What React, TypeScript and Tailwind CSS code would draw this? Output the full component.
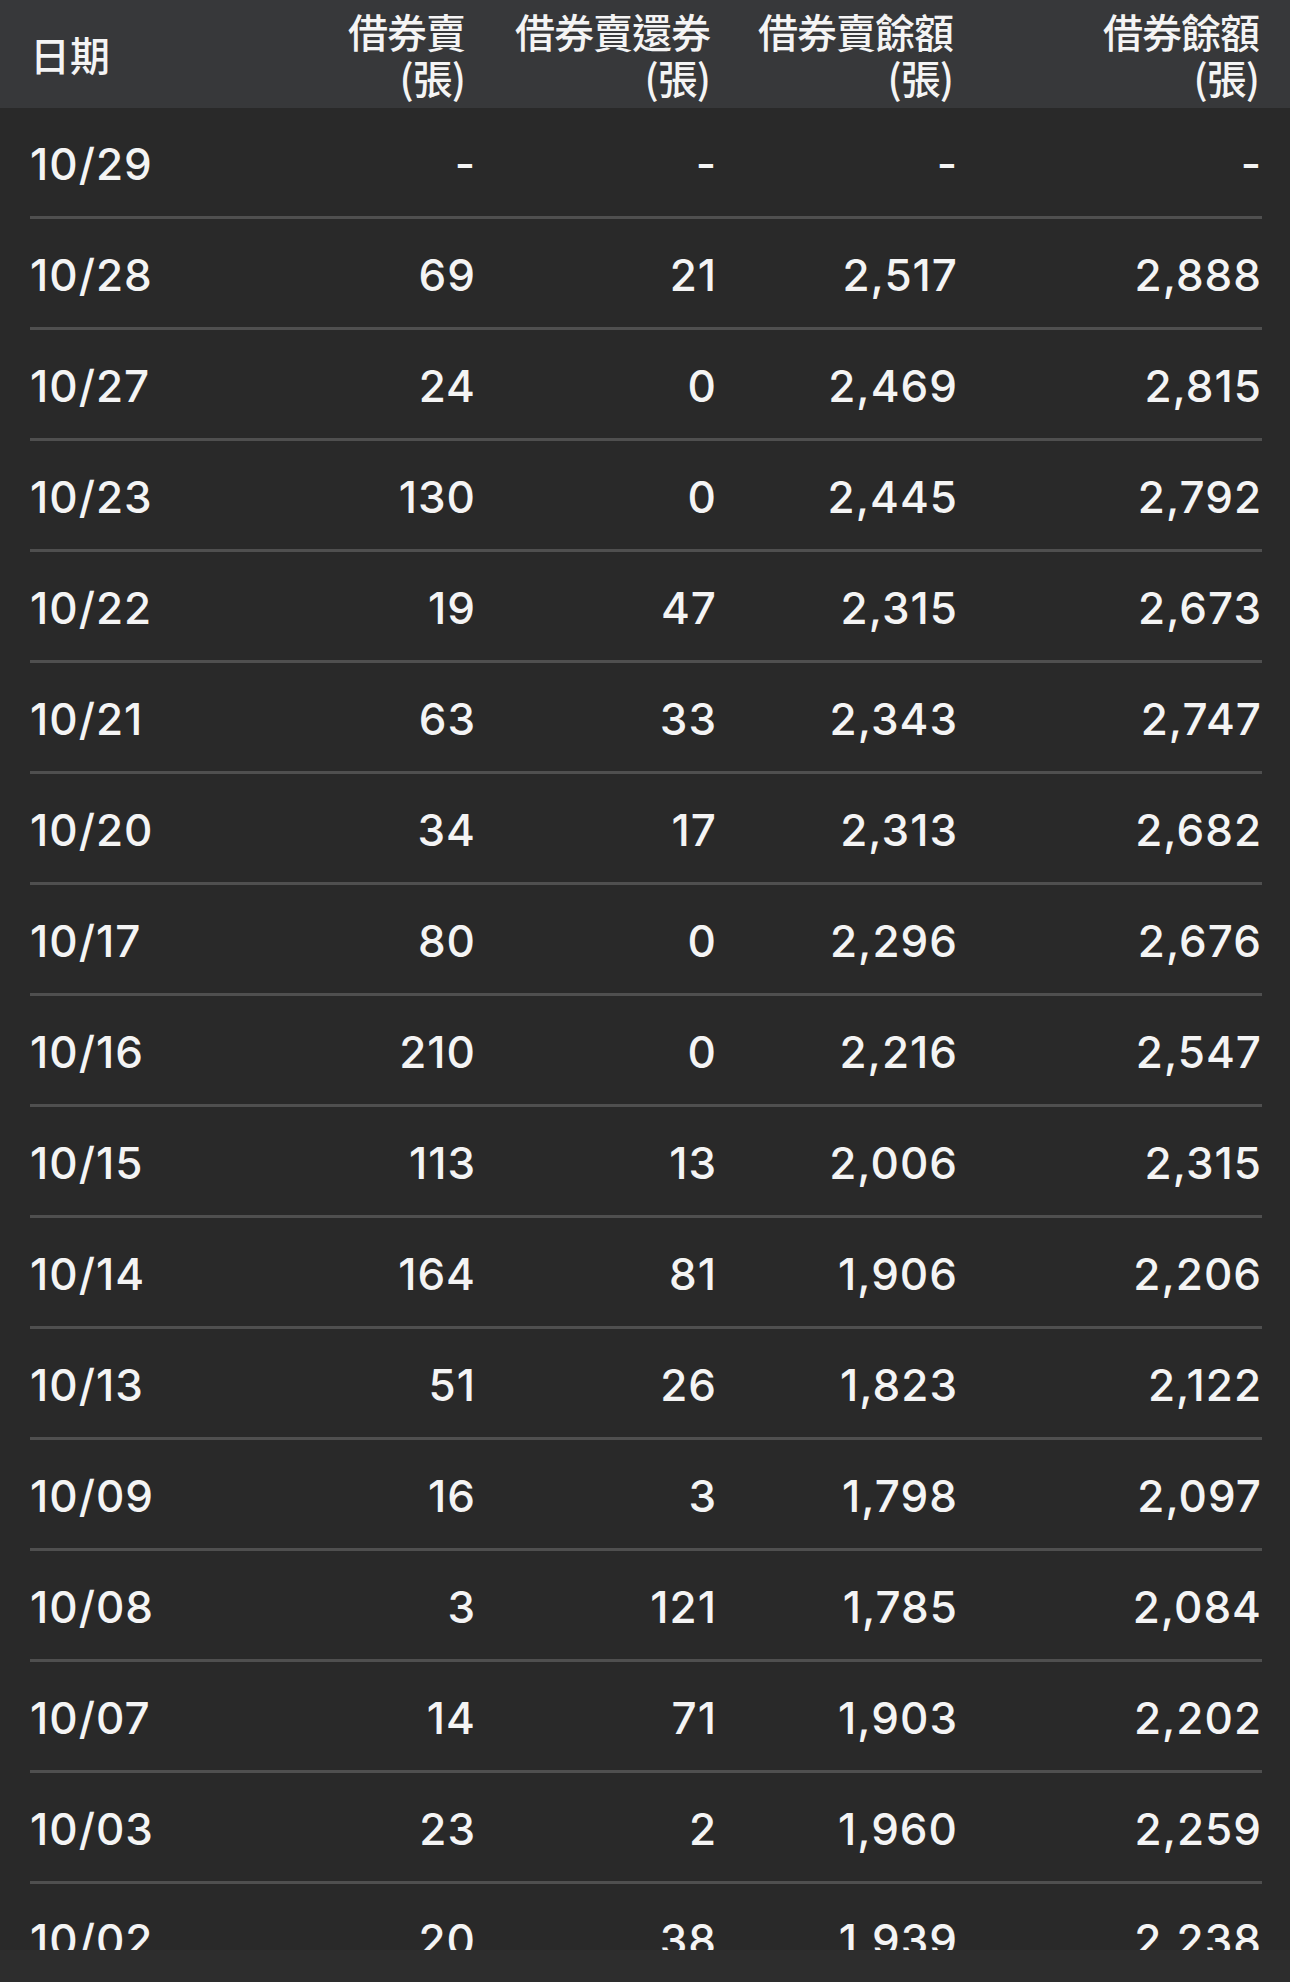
const rows: [string, string, string, string, string][] = [
  ['10/29', '-', '-', '-', '-'],
  ['10/28', '69', '21', '2,517', '2,888'],
  ['10/27', '24', '0', '2,469', '2,815'],
  ['10/23', '130', '0', '2,445', '2,792'],
  ['10/22', '19', '47', '2,315', '2,673'],
  ['10/21', '63', '33', '2,343', '2,747'],
  ['10/20', '34', '17', '2,313', '2,682'],
  ['10/17', '80', '0', '2,296', '2,676'],
  ['10/16', '210', '0', '2,216', '2,547'],
  ['10/15', '113', '13', '2,006', '2,315'],
  ['10/14', '164', '81', '1,906', '2,206'],
  ['10/13', '51', '26', '1,823', '2,122'],
  ['10/09', '16', '3', '1,798', '2,097'],
  ['10/08', '3', '121', '1,785', '2,084'],
  ['10/07', '14', '71', '1,903', '2,202'],
  ['10/03', '23', '2', '1,960', '2,259'],
  ['10/02', '20', '38', '1,939', '2,238'],
]

const cols = 'grid grid-cols-[205px_241px_241px_241px_1fr] items-center'

const HeadCell = ({ top, pad }: { top: string; pad: string }) => (
  <div className={`text-right leading-[46px] tracking-[-1px] ${pad}`}>
    <div>{top}</div>
    <div>(張)</div>
  </div>
)

export default function App() {
  return (
    <div className="w-[1290px] h-[1982px] flex flex-col overflow-hidden bg-[#292929] text-[#f4f4f4]">
      <div className={`${cols} h-[108px] shrink-0 px-[30px] bg-[#37383a] text-[40px] font-['Noto_Sans_CJK_TC',sans-serif] font-medium`}>
        <div>日期</div>
        <HeadCell top="借券賣" pad="pr-[11px]" />
        <HeadCell top="借券賣還券" pad="pr-[7px]" />
        <HeadCell top="借券賣餘額" pad="pr-[5px]" />
        <HeadCell top="借券餘額" pad="pr-[1px]" />
      </div>

      <div className="flex-1 overflow-hidden pl-[30px] pr-[28px] font-['Inter',sans-serif] font-medium text-[44px] tracking-[1px]">
        {rows.map(r => (
          <div key={r[0]} className={`${cols} h-[111px] pt-[4px] border-b-[3px] border-[#4f4f4f]`}>
            <div>{r[0]}</div>
            <div className="text-right">{r[1]}</div>
            <div className="text-right">{r[2]}</div>
            <div className="text-right">{r[3]}</div>
            <div className="text-right">{r[4]}</div>
          </div>
        ))}
      </div>

      <div className="h-[32px] shrink-0 bg-[#2d2d2d]" />
    </div>
  )
}
